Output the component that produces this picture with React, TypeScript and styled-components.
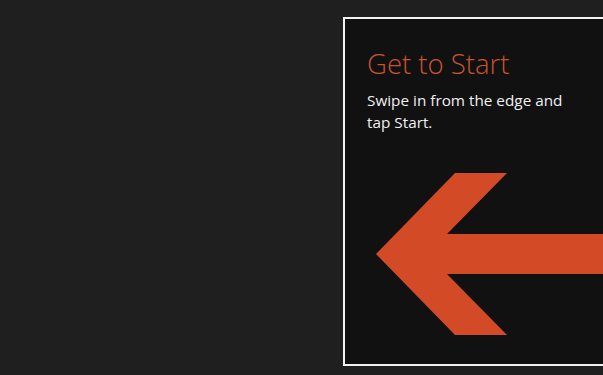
import React from 'react'
import styled, { createGlobalStyle } from 'styled-components'

const GlobalStyle = createGlobalStyle`
  html, body {
    margin: 0;
    padding: 0;
    background: #1f1f1f;
    overflow: hidden;
  }
  body {
    font-family: "Open Sans", "Liberation Sans", sans-serif;
  }
`;

const Screen = styled.div`
  width: 603px;
  height: 375px;
  display: flex;
  padding: 17px 0 0 343px;
  box-sizing: border-box;
  overflow: hidden;
`;

const Tip = styled.div`
  flex: none;
  width: 290px;
  height: 349px;
  box-sizing: border-box;
  border: 2px solid #f2f2f2;
  background: #111111;
  display: flex;
  flex-direction: column;
`;

const Copy = styled.div`
  padding: 27px 0 0 22px;
`;

const Title = styled.h1`
  margin: 0;
  font-weight: 300;
  font-size: 27.5px;
  line-height: 36px;
  color: #c9532f;
`;

const Body = styled.p`
  margin: 7px 0 0;
  width: 220px;
  font-size: 15.3px;
  line-height: 22px;
  color: #f0f0f0;
`;

const Arrow = styled.svg`
  display: block;
  margin-top: 38px;
  width: 288px;
  height: 166px;
`;

const App: React.FC = () => {
  return (
    <>
      <GlobalStyle />
      <Screen>
        <Tip>
          <Copy>
            <Title>Get to Start</Title>
            <Body>Swipe in from the edge and tap Start.</Body>
          </Copy>
          <Arrow viewBox="0 0 288 166">
            <polygon
              points="31,83 110,2 162,2 102,63 288,63 288,103 102,103 162,164 110,164"
              fill="#d34a27"
            />
          </Arrow>
        </Tip>
      </Screen>
    </>
  );
};

export default App;
